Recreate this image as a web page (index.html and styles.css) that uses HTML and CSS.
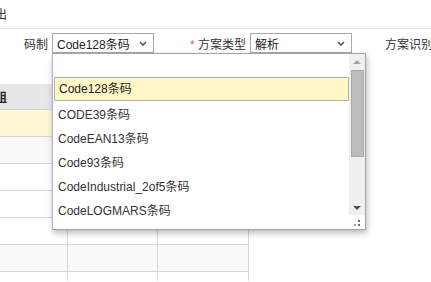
FILE: index.html
```html
<!DOCTYPE html>
<html lang="zh-CN">
<head>
    <meta charset="UTF-8">
    <meta name="viewport" content="width=device-width, initial-scale=1.0">
    <title>条码方案</title>
    <link rel="stylesheet" href="styles.css">
</head>
<body>
    <div class="toolbar"><span class="tool-btn">导出</span></div>

    <div class="form-row">
        <label class="field-label first">码制</label>
        <div class="select">
            <span>Code128条码</span>
            <svg class="chevron" width="8" height="5" viewBox="0 0 8 5"><path d="M1 1 L4 4 L7 1" fill="none" stroke="#555" stroke-width="1.6"/></svg>
        </div>
        <label class="field-label second"><span class="required">*</span> 方案类型</label>
        <div class="select">
            <span>解析</span>
            <svg class="chevron" width="8" height="5" viewBox="0 0 8 5"><path d="M1 1 L4 4 L7 1" fill="none" stroke="#555" stroke-width="1.6"/></svg>
        </div>
        <label class="field-label third">方案识别</label>
    </div>

    <table class="grid">
        <tr class="head">
            <th class="col-a"><span class="cut">组</span></th>
            <th class="col-b"></th>
            <th class="col-c"></th>
        </tr>
        <tr class="selected"><td></td><td></td><td></td></tr>
        <tr class="alt"><td></td><td></td><td></td></tr>
        <tr><td></td><td></td><td></td></tr>
        <tr><td></td><td></td><td></td></tr>
        <tr><td></td><td></td><td></td></tr>
        <tr class="alt"><td></td><td></td><td></td></tr>
        <tr class="last"><td></td><td></td><td></td></tr>
    </table>

    <!-- dropdown for 码制 -->
    <div class="dropdown">
        <div class="dropdown-body">
            <div class="search-row"></div>
            <ul class="options">
                <li class="active">Code128条码</li>
                <li>CODE39条码</li>
                <li>CodeEAN13条码</li>
                <li>Code93条码</li>
                <li>CodeIndustrial_2of5条码</li>
                <li>CodeLOGMARS条码</li>
            </ul>
        </div>
        <div class="scroll-col">
            <div class="scrollbar">
                <div class="arrow up"></div>
                <div class="thumb"></div>
                <div class="track"></div>
                <div class="arrow down"></div>
            </div>
            <div class="grip">
                <i class="g1"></i><i class="g2"></i><i class="g3"></i>
            </div>
        </div>
    </div>
</body>
</html>
```

FILE: styles.css
```css
* {
    margin: 0;
    padding: 0;
    box-sizing: border-box;
}

html {
    overflow: hidden;
}

body {
    width: 431px;
    height: 282px;
    overflow: hidden;
    position: relative;
    background: #fff;
    font-family: "Liberation Sans", Arial, "Noto Sans CJK SC", sans-serif;
    font-size: 12px;
    color: #333;
}

.toolbar {
    height: 29px;
    border-bottom: 1px solid #e2e2e2;
    display: flex;
    align-items: center;
    padding-bottom: 2px;
}

.tool-btn {
    margin-left: -17px;
    font-size: 12px;
    color: #333;
}

.form-row {
    display: flex;
    align-items: center;
    height: 20px;
    margin-top: 4px;
}

.form-row > * {
    flex-shrink: 0;
}

.field-label {
    text-align: right;
    padding-right: 4px;
    color: #333;
    white-space: nowrap;
}

.field-label.first {
    width: 52px;
}

.field-label.second {
    width: 96px;
}

.field-label.third {
    text-align: left;
    margin-left: 33px;
}

.required {
    color: #f0507a;
}

.select {
    width: 102px;
    height: 20px;
    border: 1px solid #a9a9a9;
    display: flex;
    align-items: center;
    justify-content: space-between;
    padding: 0 6px 0 4px;
    color: #222;
    background: #fff;
}

.chevron {
    display: block;
}

.grid {
    margin-top: 31px;
    border-collapse: collapse;
    table-layout: fixed;
}

.grid th,
.grid td {
    height: 27px;
    border: 1px solid #d6d6d6;
    border-left: none;
    padding: 0;
}

.grid .head th {
    height: 25px;
    background: #e7e7e7;
    border-top: none;
    text-align: left;
    font-weight: bold;
    color: #222;
}

.grid .last td {
    height: 10px;
    border-bottom: none;
}

.col-a {
    width: 67px;
}

.col-b {
    width: 90px;
}

.col-c {
    width: 91px;
}

.cut {
    margin-left: -5px;
}

.grid .selected td {
    background: #fff7d1;
}

.grid .alt td {
    background: #f9f9f9;
}

/* dropdown popup */
.dropdown {
    position: absolute;
    left: 52px;
    top: 53px;
    width: 314px;
    height: 177px;
    background: #fff;
    border: 1px solid #a3a3a8;
    border-left-color: #b4b0d2;
    box-shadow: 1px 3px 6px rgba(0, 0, 0, 0.28);
    display: flex;
}

.dropdown-body {
    flex: 1;
}

.search-row {
    height: 23px;
}

.options {
    list-style: none;
}

.options li {
    height: 24px;
    line-height: 24px;
    padding-left: 5px;
    color: #333;
    white-space: nowrap;
}

.options li.active {
    margin-left: 1px;
    height: 24px;
    line-height: 22px;
    padding-left: 4px;
    background: #fff8c6;
    border: 1px solid #b3b3b3;
    margin-bottom: 2px;
    color: #222;
}

.scroll-col {
    width: 16px;
    display: flex;
    flex-direction: column;
}

.scrollbar {
    height: 161px;
    background: #f0f0f0;
    display: flex;
    flex-direction: column;
    align-items: center;
}

.arrow {
    height: 16px;
    width: 16px;
    position: relative;
}

.arrow::after {
    content: "";
    position: absolute;
    left: 4px;
    width: 0;
    height: 0;
    border-left: 4px solid transparent;
    border-right: 4px solid transparent;
}

.arrow.up::after {
    top: 6px;
    border-bottom: 4px solid #a3a3a3;
}

.arrow.down::after {
    top: 7px;
    border-top: 4px solid #505050;
}

.thumb {
    width: 13px;
    height: 87px;
    background: #bdbdbd;
    border: 1px solid #a8a8a8;
}

.track {
    flex: 1;
}

.grip {
    flex: 1;
    position: relative;
}

.grip i {
    position: absolute;
    width: 2px;
    height: 2px;
    background: #6e6e6e;
}

.grip .g1 {
    left: 9px;
    top: 5px;
}

.grip .g2 {
    left: 9px;
    top: 9px;
}

.grip .g3 {
    left: 5px;
    top: 9px;
    background: #a0a0a0;
}
```
